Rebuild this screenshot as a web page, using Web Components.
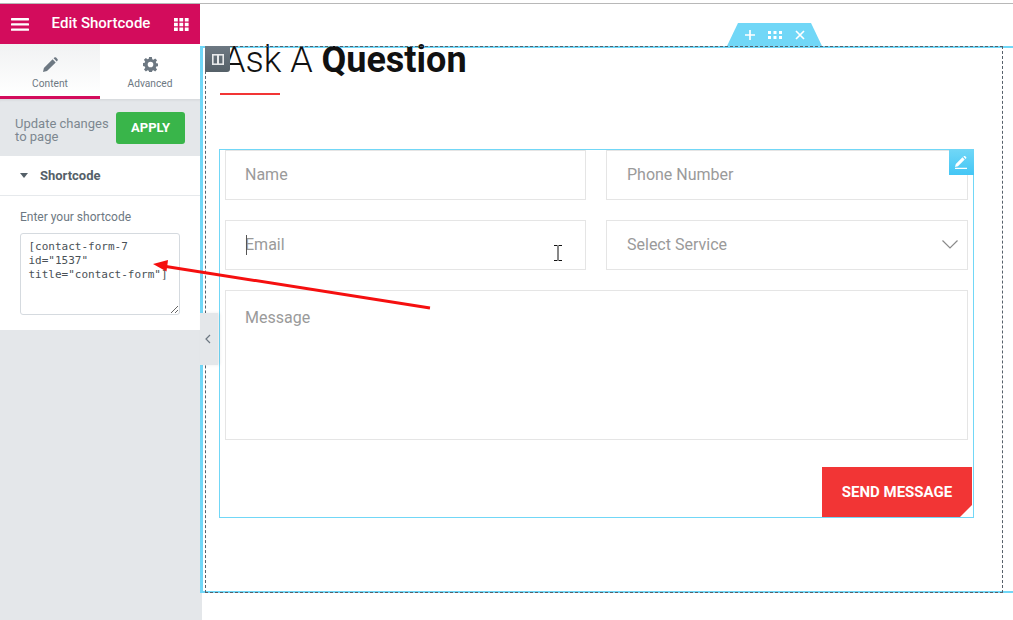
<!DOCTYPE html>
<html lang="en">
<head>
<meta charset="utf-8">
<title>Edit Shortcode</title>
<style>
  html, body { margin: 0; height: 100%; }
  body { font-family: Roboto, "Liberation Sans", sans-serif; background: #fff; overflow: hidden; }
  editor-app { display: block; height: 620px; }
</style>
</head>
<body>
<editor-app>
  <editor-panel slot="panel"></editor-panel>
  <section-preview slot="preview">
    <ask-heading></ask-heading>
    <contact-form></contact-form>
  </section-preview>
</editor-app>

<script>
// Page frame: thin grey line on top, panel on the left, preview on the right
class EditorApp extends HTMLElement {
    constructor() {
        super();
        this.attachShadow({ mode: "open" }).innerHTML = `
            <style>
                :host { display: block; position: relative; padding-top: 3px; box-sizing: border-box; }
                .line { height: 1px; background: #b8b8b8; }
                .main { display: flex; height: 616px; }
                .panel { flex: 0 0 200px; display: flex; }
                .preview { flex: 1; min-width: 0; }
                svg { position: absolute; left: 0; top: 0; pointer-events: none; }
            </style>
            <div class="line"></div>
            <div class="main">
                <div class="panel"><slot name="panel"></slot></div>
                <div class="preview"><slot name="preview"></slot></div>
            </div>
            <svg width="1013" height="620" viewBox="0 0 1013 620">
                <line x1="430" y1="308" x2="166" y2="266.500" stroke="#f50f0f" stroke-width="3"/>
                <polygon points="153,264 168,260 166.500,271.500" fill="#f50f0f"/>
            </svg>
        `;
    }
}

class EditorPanel extends HTMLElement {
    constructor() {
        super();
        this.attachShadow({ mode: "open" }).innerHTML = `
            <style>
                :host { display: flex; flex-direction: column; width: 200px; background: #e4e7ea; color: #6d7882; }
                .head { height: 40px; background: #d30c5c; color: #fff; display: flex; align-items: center; justify-content: space-between; padding: 0 11px; font-size: 15px; font-weight: 500; }
                .head span { position: relative; left: -1px; top: -1px; }
                .head svg { display: block; }
                .tabs { display: flex; height: 55px; background: #fff; }
                .tab { flex: 1; display: flex; flex-direction: column; align-items: center; padding-top: 13px; box-sizing: border-box; font-size: 10.200px; line-height: 13px; gap: 5px; color: #6d7882; }
                .tab.active { background: linear-gradient(#f1f2f3, #fff); border-bottom: 3px solid #d30c5c; }
                .tab svg { display: block; }
                .apply { height: 57px; display: flex; align-items: center; justify-content: space-between; padding: 0 15px; box-sizing: border-box; font-size: 13px; line-height: 13px; color: #7d8790; box-shadow: inset 0 3px 3px -2px rgba(0,0,0,.08); }
                .apply span { position: relative; top: 2px; }
                .apply button { width: 69px; height: 32px; border: 0; border-radius: 3px; background: #39b54a; color: #fff; font: 700 13px Roboto, sans-serif; padding: 0; }
                .sec { background: #fff; height: 174px; }
                .sec-head { height: 40px; display: flex; align-items: center; padding-left: 20px; box-sizing: border-box; border-bottom: 1px solid #e6e9ec; font-size: 13px; font-weight: 700; color: #556068; gap: 12px; }
                .caret { width: 0; height: 0; border: 4px solid transparent; border-top: 5px solid #556068; border-bottom: 0; }
                .body { padding: 14px 20px 0; }
                label { display: block; font-size: 12px; line-height: 14px; color: #6d7882; margin-bottom: 9px; }
                textarea { display: block; width: 160px; height: 82px; box-sizing: border-box; margin: 0; padding: 6px 7.500px; border: 1px solid #d5dadf; border-radius: 3px; font: 11px/14px "DejaVu Sans Mono", monospace; color: #495157; background: #fff; outline: 0; }
            </style>
            <div class="head">
                <svg width="19" height="13" viewBox="0 0 19 13" fill="#fff"><rect width="18" height="2.400" y="0" rx=".6"/><rect width="18" height="2.400" y="5.200" rx=".6"/><rect width="18" height="2.400" y="10.400" rx=".6"/></svg>
                <span>Edit Shortcode</span>
                <svg width="15" height="13" viewBox="0 0 15 13" fill="#fff"><path d="M0 0h3.800v3.500H0zM5.400 0h3.800v3.500H5.400zM10.800 0h3.800v3.500h-3.800zM0 4.800h3.800v3.500H0zM5.400 4.800h3.800v3.500H5.400zM10.800 4.800h3.800v3.500h-3.800zM0 9.600h3.800v3.400H0zM5.400 9.600h3.800v3.400H5.400zM10.800 9.600h3.800v3.400h-3.800z"/></svg>
            </div>
            <div class="tabs">
                <div class="tab active">
                    <svg width="15" height="15" viewBox="0 0 15 15" fill="#6d7882"><path d="M0 15l.9-4L9.600 2.300l3.100 3.100L4 14.100zM10.600 1.300l.7-.7a1.300 1.300 0 0 1 1.800 0l1.300 1.300a1.300 1.300 0 0 1 0 1.800l-.7.7z"/></svg>
                    <span>Content</span>
                </div>
                <div class="tab">
                    <svg width="15" height="15" viewBox="0 0 24 24" fill="#6d7882"><path fill-rule="evenodd" d="M14.200 0l.6 3.400 1.900.8 2.800-2 3 3-2 2.900.8 1.800 3.400.6v4.200l-3.400.6-.8 1.900 2 2.800-3 3-2.800-2-1.900.8-.6 3.400H9.900l-.6-3.400-1.900-.8-2.800 2-3-3 2-2.800-.8-1.900L-.7 14v-4.200l3.400-.6.800-1.800-2-2.900 3-3 2.800 2 1.900-.8.600-3.400zM12 7.500a4.500 4.500 0 1 0 0 9 4.500 4.500 0 0 0 0-9z"/></svg>
                    <span>Advanced</span>
                </div>
            </div>
            <div class="apply">
                <span>Update changes<br>to page</span>
                <button type="button">APPLY</button>
            </div>
            <div class="sec">
                <div class="sec-head"><span class="caret"></span><span>Shortcode</span></div>
                <div class="body">
                    <label>Enter your shortcode</label>
                    <textarea spellcheck="false">[contact-form-7 id="1537" title="contact-form"]</textarea>
                </div>
            </div>
        `;
    }
}

// Canvas side: dashed section frame, with its handles lying over it
class SectionPreview extends HTMLElement {
    constructor() {
        super();
        this.attachShadow({ mode: "open" }).innerHTML = `
            <style>
                :host { display: block; position: relative; height: 100%; }
                .frame { position: absolute; left: 0; right: 0; top: 42px; height: 547px; border-top: 2px solid #71d7f7; border-bottom: 2px solid #71d7f7; border-left: 3px solid #71d7f7; box-sizing: border-box; }
                .dash { position: absolute; left: 5px; top: 42px; width: 798px; height: 547px; border: 1px dashed #56606a; box-sizing: border-box; pointer-events: none; }
                .content { position: relative; padding: 35px 0 0 20px; }
                .top-handle { position: absolute; left: 527px; top: 19px; width: 95px; height: 23px; background: #71d7f7; clip-path: polygon(11px 0, 84px 0, 95px 100%, 0 100%); display: flex; align-items: center; justify-content: center; gap: 13px; }
                .col-handle { position: absolute; left: 5px; top: 42px; width: 25px; height: 26px; border-radius: 0 0 3px 0; background: linear-gradient(#6d7882, #556068); display: flex; align-items: center; justify-content: center; }
                .toggle { position: absolute; left: 0; top: 309px; width: 18px; height: 52px; padding-right: 2px; box-sizing: border-box; background: #e4e7ea; box-shadow: 2px 0 3px rgba(0,0,0,.08); display: flex; align-items: center; justify-content: center; }
                .foot { position: absolute; left: 0; top: 589px; bottom: 0; width: 2px; background: #e4e7ea; }
                svg { display: block; }
            </style>
            <div class="frame"></div>
            <div class="foot"></div>
            <div class="content"><slot></slot></div>
            <div class="dash"></div>
            <div class="top-handle">
                <svg width="10" height="10" viewBox="0 0 10 10" stroke="#fff" stroke-width="1.700"><path d="M5 0v10M0 5h10"/></svg>
                <svg width="14" height="8" viewBox="0 0 14 8" fill="#fff"><path d="M0 0h3v3H0zM5.500 0h3v3h-3zM11 0h3v3h-3zM0 5h3v3H0zM5.500 5h3v3h-3zM11 5h3v3h-3z"/></svg>
                <svg width="10" height="10" viewBox="0 0 10 10" stroke="#fff" stroke-width="1.700"><path d="M1 1l8 8M9 1l-8 8"/></svg>
            </div>
            <div class="col-handle">
                <svg width="12" height="11" viewBox="0 0 12 11" fill="none" stroke="#fff" stroke-width="1.600" opacity=".85"><rect x=".8" y=".8" width="10.400" height="9.400"/><path d="M6 1v9" stroke-width="2"/></svg>
            </div>
            <div class="toggle">
                <svg width="6" height="10" viewBox="0 0 6 10" fill="none" stroke="#6d7882" stroke-width="1.200"><path d="M5 1L1 5l4 4"/></svg>
            </div>
        `;
    }
}

class AskHeading extends HTMLElement {
    constructor() {
        super();
        this.attachShadow({ mode: "open" }).innerHTML = `
            <style>
                :host { display: block; height: 110px; margin-left: 3px; }
                h2 { margin: 0; font: 300 36px/42px Roboto, sans-serif; color: #111; }
                b { font-weight: 700; }
                i { display: block; width: 60px; height: 2px; margin: 12px 0 0 -3px; background: #f23535; }
            </style>
            <h2>Ask A <b>Question</b></h2>
            <i></i>
        `;
    }
}

class FormField extends HTMLElement {
    static get observedAttributes() {
        return ["label"];
    }

    constructor() {
        super();
        this.attachShadow({ mode: "open" }).innerHTML = `
            <style>
                :host { display: block; box-sizing: border-box; height: 50px; border: 1px solid #e5e5e5; padding: 0 20px; font-size: 16px; line-height: 47px; color: #9a9a9a; position: relative; }
                :host([tall]) { height: 150px; line-height: 54px; }
                :host([focused])::before { content: ""; position: absolute; left: 20px; top: 14px; width: 1px; height: 20px; background: #555; }
                svg { position: absolute; right: 9px; top: 19px; display: none; }
                :host([select]) svg { display: block; }
            </style>
            <span></span>
            <svg width="16" height="9" viewBox="0 0 16 9" fill="none" stroke="#8a8a8a" stroke-width="1.200"><path d="M.5.5L8 8 15.500.5"/></svg>
        `;
    }

    attributeChangedCallback() {
        this.shadowRoot.querySelector("span").textContent = this.getAttribute("label");
    }
}

class ContactForm extends HTMLElement {
    constructor() {
        super();
        this.attachShadow({ mode: "open" }).innerHTML = `
            <style>
                :host { display: block; position: relative; box-sizing: border-box; width: 755px; height: 369px; margin-left: -1px; border: 1px solid #71d7f7; padding: 0 5px; }
                .grid { display: grid; grid-template-columns: 361px 362px; column-gap: 20px; row-gap: 20px; }
                .wide { grid-column: 1 / -1; }
                .grid > :nth-child(odd) { padding-left: 19px; }
                .send { position: absolute; right: 1px; bottom: 0; width: 150px; height: 50px; border: 0; padding: 0; background: #f23535; color: #fff; font: 700 15px Roboto, sans-serif; clip-path: polygon(0 0, 100% 0, 100% 38px, 138px 100%, 0 100%); }
                .edit { position: absolute; right: -1px; top: -1px; width: 25px; height: 26px; background: linear-gradient(#71d7f7, #44c6f5); display: flex; align-items: center; justify-content: center; }
                .cursor { position: absolute; left: 333px; top: 95px; display: block; }
            </style>
            <div class="grid">
                <form-field label="Name"></form-field>
                <form-field label="Phone Number"></form-field>
                <form-field label="Email" focused></form-field>
                <form-field label="Select Service" select></form-field>
                <form-field class="wide" label="Message" tall></form-field>
            </div>
            <button type="button" class="send">SEND MESSAGE</button>
            <div class="edit">
                <svg width="13" height="13" viewBox="0 0 13 13" fill="#fff"><path d="M0 11l.8-3L7.500 1.300l2.200 2.200L3 10.200zM8.300.600l.6-.4a1 1 0 0 1 1.300 0l.9.900a1 1 0 0 1 0 1.300l-.5.600zM0 11.800h12V13H0z"/></svg>
            </div>
            <svg class="cursor" width="10" height="16" viewBox="0 0 10 16" fill="none" stroke="#111" stroke-width="1"><path d="M1 .5h3.500M5.500.5H9M5 1v14M1 15.500h3.500M5.500 15.500H9"/></svg>
        `;
    }
}

customElements.define("editor-app", EditorApp);
customElements.define("editor-panel", EditorPanel);
customElements.define("section-preview", SectionPreview);
customElements.define("ask-heading", AskHeading);
customElements.define("form-field", FormField);
customElements.define("contact-form", ContactForm);
</script>
</body>
</html>
